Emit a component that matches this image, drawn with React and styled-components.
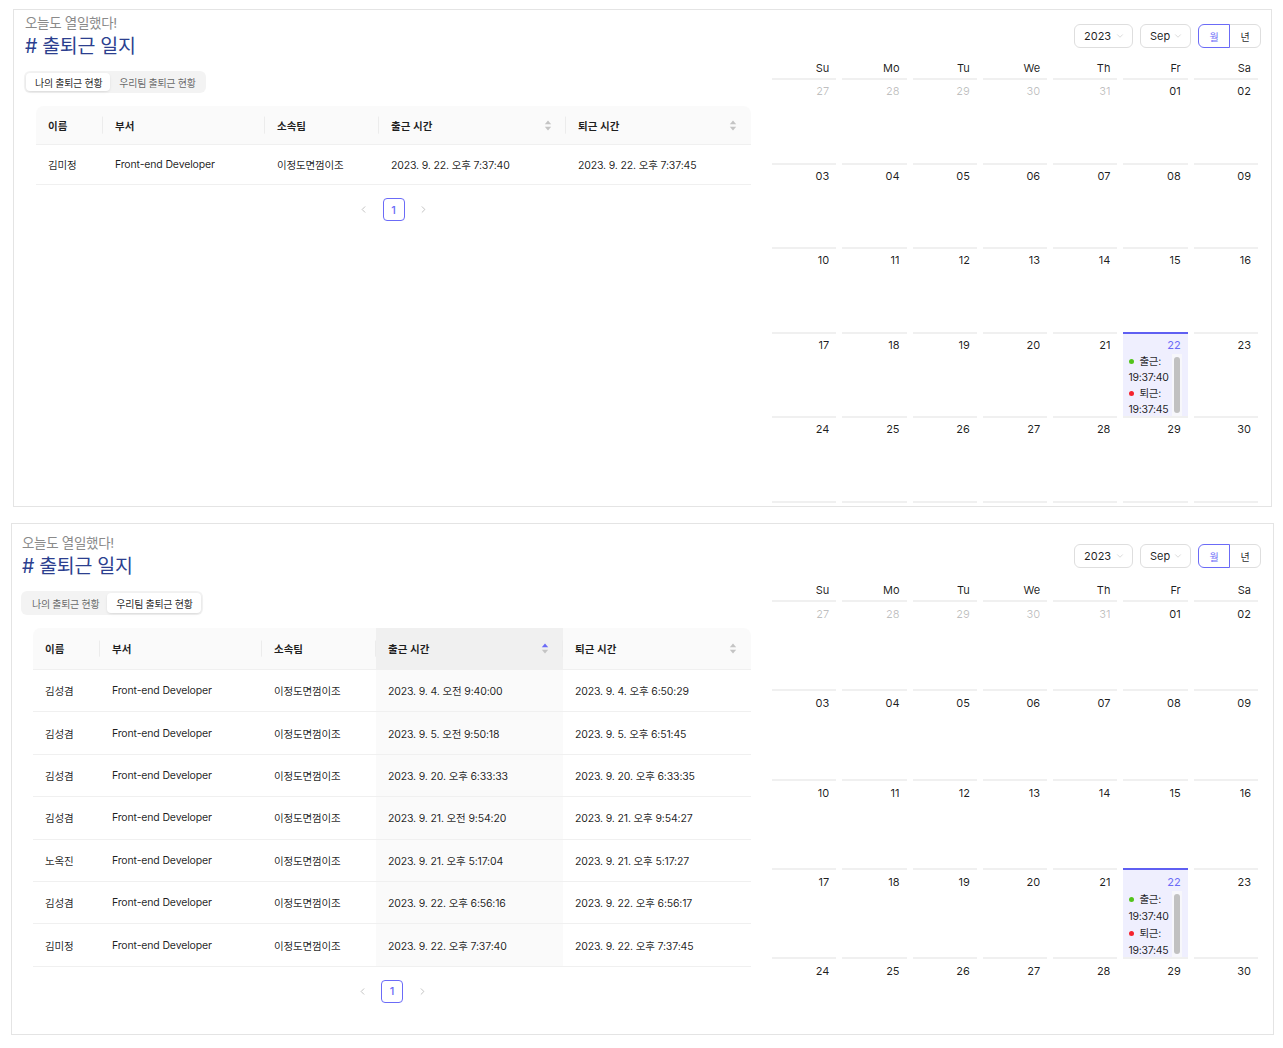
import React from 'react';
import styled, { createGlobalStyle } from 'styled-components';
import { ChevronDown, ChevronLeft, ChevronRight } from 'lucide-react';

const PRIMARY = '#6b6bf7';

const GlobalStyle = createGlobalStyle`
  * { box-sizing: border-box; }
  body {
    margin: 0;
    background: #fff;
    font-family: Inter, "Noto Sans CJK KR", sans-serif;
    color: rgba(0, 0, 0, 0.88);
  }
`;

const Page = styled.div`
  display: flex;
  flex-direction: column;
  gap: 16px;
  padding-top: 9px;
`;

const Panel = styled.section`
  margin-left: ${p => p.$left}px;
  width: ${p => p.$width}px;
  height: ${p => p.$height}px;
  border: 1px solid #e4e4e4;
  background: #fff;
  display: flex;
  overflow: hidden;
  padding-right: ${p => p.$padRight}px;
`;

const Journal = styled.div`
  flex: 1;
  display: flex;
  flex-direction: column;
  padding-top: ${p => p.$padTop}px;
  padding-left: ${p => p.$padLeft}px;
`;

const Subtitle = styled.div`
  font-size: 13.5px;
  line-height: 18px;
  color: #8a8a8a;
  letter-spacing: -0.3px;
`;

const Title = styled.h1`
  margin: 2px 0 0;
  font-size: 19.5px;
  line-height: 24px;
  font-weight: 400;
  letter-spacing: -0.3px;
  color: #2c3f8f;
`;

const Segmented = styled.div`
  align-self: flex-start;
  display: inline-flex;
  height: ${p => p.$h}px;
  margin: 13px 0 0 -1px;
  padding: 2px;
  border-radius: 6px;
  background: #f3f3f3;
`;

const Segment = styled.div`
  display: flex;
  align-items: center;
  padding: 0 8px 0 9px;
  border-radius: 4px;
  font-size: 10px;
  letter-spacing: -0.3px;
  color: ${p => (p.$active ? 'rgba(0,0,0,0.88)' : 'rgba(0,0,0,0.6)')};
  background: ${p => (p.$active ? '#fff' : 'transparent')};
  box-shadow: ${p =>
    p.$active ? '0 1px 2px rgba(0,0,0,0.06), 0 1px 4px -1px rgba(0,0,0,0.08)' : 'none'};
`;

const TableWrap = styled.div`
  width: ${p => p.$w}px;
  margin: 13px 0 0 11px;
`;

const Table = styled.table`
  width: 100%;
  border-collapse: separate;
  border-spacing: 0;
  table-layout: fixed;
  font-size: 10.5px;
`;

const Th = styled.th`
  position: relative;
  height: ${p => p.$h}px;
  padding: 0 12px;
  text-align: left;
  font-weight: 600;
  background: ${p => (p.$sorted ? '#f0f0f0' : '#fafafa')};
  border-bottom: 1px solid #f0f0f0;

  &:first-child { border-top-left-radius: 8px; }
  &:last-child { border-top-right-radius: 8px; }

  &:not(:last-child)::before {
    content: '';
    position: absolute;
    right: 0;
    top: 50%;
    width: 1px;
    height: 1.6em;
    transform: translateY(-50%);
    background: #ececec;
  }
`;

const SortHead = styled.div`
  display: flex;
  align-items: center;
  justify-content: space-between;
  padding-right: 2px;
`;

const Td = styled.td`
  height: ${p => p.$h}px;
  padding: 0 12px;
  white-space: nowrap;
  letter-spacing: -0.15px;
  background: ${p => (p.$sorted ? '#fafafa' : '#fff')};
  border-bottom: 1px solid #f0f0f0;
`;

const Pager = styled.div`
  display: flex;
  justify-content: center;
  align-items: center;
  gap: 8px;
  margin-top: 13px;
`;

const PageArrow = styled.div`
  width: 22px;
  height: 22px;
  display: flex;
  align-items: center;
  justify-content: center;
  color: #a8a8a8;
`;

const PageItem = styled.div`
  width: 22px;
  height: 23px;
  display: flex;
  align-items: center;
  justify-content: center;
  border: 1px solid ${PRIMARY};
  border-radius: 4px;
  font-size: 11px;
  font-weight: 500;
  color: ${PRIMARY};
`;

const Calendar = styled.div`
  width: 492px;
  flex: 0 0 auto;
  padding-top: ${p => p.$padTop}px;
`;

const Controls = styled.div`
  display: flex;
  justify-content: flex-end;
  gap: 7px;
  height: 24px;
`;

const Select = styled.div`
  width: ${p => p.$w}px;
  display: flex;
  align-items: center;
  justify-content: space-between;
  padding: 0 7px 0 9px;
  border: 1px solid #dedede;
  border-radius: 6px;
  font-size: 11px;
  color: rgba(0, 0, 0, 0.88);
`;

const Radio = styled.div`
  display: flex;
`;

const RadioBtn = styled.div`
  width: 32px;
  display: flex;
  align-items: center;
  justify-content: center;
  font-size: 10px;
  border: 1px solid ${p => (p.$active ? PRIMARY : '#dedede')};
  color: ${p => (p.$active ? PRIMARY : 'rgba(0,0,0,0.88)')};
  margin-left: ${p => (p.$active ? 0 : -1)}px;
  position: relative;
  z-index: ${p => (p.$active ? 1 : 0)};

  &:first-child { border-radius: 6px 0 0 6px; }
  &:last-child { border-radius: 0 6px 6px 0; }
`;

const Grid = styled.div`
  display: grid;
  grid-template-columns: repeat(7, 1fr);
  margin-top: ${p => p.$gap}px;
`;

const WeekDay = styled.div`
  height: 20px;
  line-height: 20px;
  padding-right: 10px;
  text-align: right;
  font-size: 11px;
`;

const Cell = styled.div`
  height: ${p => p.$h}px;
  margin: 0 3px;
  padding: ${p => p.$pad}px 6px 0 5px;
  border-top: 2px solid ${p => (p.$today ? '#5f5ff2' : '#f0f0f0')};
  background: ${p => (p.$today ? '#efeffe' : '#fff')};
  display: flex;
  flex-direction: column;
  overflow: hidden;
`;

const DateNum = styled.div`
  text-align: right;
  padding-right: 1px;
  font-size: 11px;
  line-height: 18px;
  color: ${p => (p.$today ? PRIMARY : p.$muted ? 'rgba(0,0,0,0.25)' : 'rgba(0,0,0,0.88)')};
`;

const EventBox = styled.div`
  flex: 1;
  display: flex;
  min-height: 0;
`;

const EventList = styled.ul`
  flex: 1;
  margin: 0;
  padding: 0;
  list-style: none;
  overflow: hidden;
  font-size: 10.5px;
  letter-spacing: -0.25px;
  line-height: ${p => p.$lh}px;
  white-space: nowrap;
`;

const EventLabel = styled.li`
  display: flex;
  align-items: center;
  gap: 5px;
  padding-left: 1px;
`;

const Dot = styled.span`
  width: 5px;
  height: 5px;
  border-radius: 50%;
  background: ${p => p.$color};
`;

const Track = styled.div`
  width: 10px;
  padding: 3px 2px 3px;
  background: #f7f7fb;
`;

const Thumb = styled.div`
  height: 100%;
  border-radius: 3px;
  background: #c1c1c1;
`;

const Sorter = ({ active }) => (
  <svg width="8" height="11" viewBox="0 0 8 11">
    <path d="M4 0.5 L7.2 4.2 H0.8 Z" fill={active ? PRIMARY : '#c4c4c4'} />
    <path d="M4 10.5 L7.2 6.8 H0.8 Z" fill="#c4c4c4" />
  </svg>
);

const WEEKDAYS = ['Su', 'Mo', 'Tu', 'We', 'Th', 'Fr', 'Sa'];

const pad = n => String(n).padStart(2, '0');

// Sep 2023 as the month view shows it; the sixth week sits below the panel edge
const buildDays = () => {
  const days = [];
  [27, 28, 29, 30, 31].forEach(d => days.push({ d, muted: true }));
  for (let d = 1; d <= 30; d++) days.push({ d, muted: false });
  while (days.length < 42) days.push({ d: null, muted: true });
  return days;
};

const DAYS = buildDays();

const MonthCalendar = ({ cfg }) => (
  <Calendar $padTop={cfg.calTop}>
    <Controls>
      <Select $w={59}>
        2023 <ChevronDown size={10} color="#c4c4c4" strokeWidth={1.5} />
      </Select>
      <Select $w={51}>
        Sep <ChevronDown size={10} color="#c4c4c4" strokeWidth={1.5} />
      </Select>
      <Radio>
        <RadioBtn $active>월</RadioBtn>
        <RadioBtn>년</RadioBtn>
      </Radio>
    </Controls>
    <Grid $gap={cfg.weekGap}>
      {WEEKDAYS.map(w => (
        <WeekDay key={w}>{w}</WeekDay>
      ))}
      {DAYS.map((day, i) => {
        const today = !day.muted && day.d === 22;
        return (
          <Cell key={i} $h={cfg.calRowH} $pad={cfg.datePad} $today={today}>
            {day.d && (
              <DateNum $muted={day.muted} $today={today}>
                {pad(day.d)}
              </DateNum>
            )}
            {today && (
              <EventBox>
                <EventList $lh={cfg.eventLH}>
                  <EventLabel>
                    <Dot $color="#52c41a" />
                    출근:
                  </EventLabel>
                  <li>19:37:40</li>
                  <EventLabel>
                    <Dot $color="#f5222d" />
                    퇴근:
                  </EventLabel>
                  <li>19:37:45</li>
                </EventList>
                <Track>
                  <Thumb />
                </Track>
              </EventBox>
            )}
          </Cell>
        );
      })}
    </Grid>
  </Calendar>
);

const COLS = [67, 162, 114, 187];

const AttendanceTable = ({ cfg, rows }) => (
  <TableWrap $w={cfg.tableW}>
    <Table>
      <colgroup>
        {COLS.map((w, i) => (
          <col key={i} style={{ width: w }} />
        ))}
        <col />
      </colgroup>
      <thead>
        <tr>
          <Th $h={cfg.headH}>이름</Th>
          <Th $h={cfg.headH}>부서</Th>
          <Th $h={cfg.headH}>소속팀</Th>
          <Th $h={cfg.headH} $sorted={cfg.sorted}>
            <SortHead>
              출근 시간 <Sorter active={cfg.sorted} />
            </SortHead>
          </Th>
          <Th $h={cfg.headH}>
            <SortHead>
              퇴근 시간 <Sorter />
            </SortHead>
          </Th>
        </tr>
      </thead>
      <tbody>
        {rows.map((r, i) => (
          <tr key={i}>
            <Td $h={cfg.rowH}>{r[0]}</Td>
            <Td $h={cfg.rowH}>Front-end Developer</Td>
            <Td $h={cfg.rowH}>이정도면껌이조</Td>
            <Td $h={cfg.rowH} $sorted={cfg.sorted}>{r[1]}</Td>
            <Td $h={cfg.rowH}>{r[2]}</Td>
          </tr>
        ))}
      </tbody>
    </Table>
    <Pager>
      <PageArrow>
        <ChevronLeft size={11} strokeWidth={1.5} />
      </PageArrow>
      <PageItem>1</PageItem>
      <PageArrow>
        <ChevronRight size={11} strokeWidth={1.5} />
      </PageArrow>
    </Pager>
  </TableWrap>
);

const MY_ROWS = [['김미정', '2023. 9. 22. 오후 7:37:40', '2023. 9. 22. 오후 7:37:45']];

const TEAM_ROWS = [
  ['김성겸', '2023. 9. 4. 오전 9:40:00', '2023. 9. 4. 오후 6:50:29'],
  ['김성겸', '2023. 9. 5. 오전 9:50:18', '2023. 9. 5. 오후 6:51:45'],
  ['김성겸', '2023. 9. 20. 오후 6:33:33', '2023. 9. 20. 오후 6:33:35'],
  ['김성겸', '2023. 9. 21. 오전 9:54:20', '2023. 9. 21. 오후 9:54:27'],
  ['노옥진', '2023. 9. 21. 오후 5:17:04', '2023. 9. 21. 오후 5:17:27'],
  ['김성겸', '2023. 9. 22. 오후 6:56:16', '2023. 9. 22. 오후 6:56:17'],
  ['김미정', '2023. 9. 22. 오후 7:37:40', '2023. 9. 22. 오후 7:37:45'],
];

const MY_CFG = {
  left: 13, width: 1259, height: 498, padRight: 10,
  padTop: 4, padLeft: 11, tabH: 22, tableW: 715, headH: 39, rowH: 40, sorted: false,
  calTop: 14, weekGap: 10, calRowH: 84.5, datePad: 2, eventLH: 16,
};

const TEAM_CFG = {
  left: 11, width: 1263, height: 512, padRight: 12,
  padTop: 10, padLeft: 10, tabH: 24, tableW: 718, headH: 42, rowH: 42.4, sorted: true,
  calTop: 20, weekGap: 12, calRowH: 89.3, datePad: 3, eventLH: 17,
};

const JournalPanel = ({ cfg, team, rows }) => (
  <Panel $left={cfg.left} $width={cfg.width} $height={cfg.height} $padRight={cfg.padRight}>
    <Journal $padTop={cfg.padTop} $padLeft={cfg.padLeft}>
      <Subtitle>오늘도 열일했다!</Subtitle>
      <Title># 출퇴근 일지</Title>
      <Segmented $h={cfg.tabH}>
        <Segment $active={!team}>나의 출퇴근 현황</Segment>
        <Segment $active={team}>우리팀 출퇴근 현황</Segment>
      </Segmented>
      <AttendanceTable cfg={cfg} rows={rows} />
    </Journal>
    <MonthCalendar cfg={cfg} />
  </Panel>
);

export default function App() {
  return (
    <>
      <GlobalStyle />
      <Page>
        <JournalPanel cfg={MY_CFG} rows={MY_ROWS} team={false} />
        <JournalPanel cfg={TEAM_CFG} rows={TEAM_ROWS} team />
      </Page>
    </>
  );
}
